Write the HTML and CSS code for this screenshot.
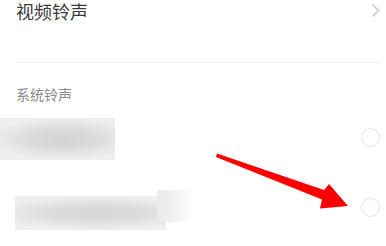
FILE: index.html
```html
<!DOCTYPE html>
<html lang="zh">
<head>
<meta charset="utf-8">
<link rel="stylesheet" href="styles.css">
</head>
<body>
<div class="page">
  <div class="row-top">
    <span class="title">视频铃声</span>
    <svg class="chev" width="9" height="15" viewBox="0 0 9 15"><polyline points="1.5,1.5 7.5,7.5 1.5,13.5" fill="none" stroke="#c8c8c8" stroke-width="1.6"/></svg>
  </div>
  <div class="divider"></div>
  <div class="label">系统铃声</div>
  <div class="item item1">
    <div class="blur1"></div>
    <span class="radio r1"></span>
  </div>
  <div class="item item2">
    <div class="blur2"></div>
    <div class="blur2b"></div>
    <span class="radio r2"></span>
  </div>
  <svg class="arrow" width="386" height="246" viewBox="0 0 386 246">
    <polygon points="217,153.5 324,190 329,184 348,206 320,208.5 322,199.5 216,157" fill="#ff0000"/>
  </svg>
</div>
</body>
</html>
```
FILE: styles.css
```css
html, body {
  margin: 0;
  padding: 0;
  background: #ffffff;
}
.page {
  position: relative;
  width: 386px;
  height: 246px;
  overflow: hidden;
  font-family: "Noto Sans CJK SC", "Noto Sans", sans-serif;
}
.row-top {
  display: flex;
  align-items: flex-start;
  justify-content: space-between;
  height: 20px;
  padding: 1px 6px 0 16px;
}
.title {
  font-size: 18px;
  line-height: 20px;
  color: #3a3a3a;
}
.chev {
  display: block;
  margin-top: 2px;
}
.divider {
  height: 1px;
  background: #efefef;
  margin: 41px 5px 0 16px;
}
.label {
  margin: 21px 0 0 16px;
  font-size: 14px;
  line-height: 20px;
  color: #8a8a8a;
}
.item {
  display: flex;
  align-items: flex-start;
}
.item1 {
  margin-top: 14px;
  height: 42px;
}
.blur1 {
  width: 115px;
  height: 42px;
  background: radial-gradient(ellipse 65% 50% at 55% 50%, #d2d2d2 0%, #dbdbdb 45%, #e8e8e8 80%, #eeeeee 100%);
}
.radio {
  width: 17px;
  height: 17px;
  border: 1.5px solid #e4e4e4;
  border-radius: 50%;
  margin-left: auto;
  margin-right: 6px;
}
.r1 { margin-top: 10px; }
.item2 {
  margin-top: 30px;
  height: 40px;
}
.blur2 {
  width: 151px;
  height: 34px;
  margin: 6px 0 0 15px;
  background: radial-gradient(ellipse 75% 50% at 55% 50%, #d5d5d5 0%, #dddddd 45%, #e9e9e9 80%, #efefef 100%);
}
.blur2b {
  width: 38px;
  height: 32px;
  margin-left: -9px;
  background: linear-gradient(to right, #e9e9e9 0%, #f1f1f1 45%, #ffffff 100%);
}
.r2 { margin-top: 8px; }
.arrow {
  position: absolute;
  left: 0;
  top: 0;
  pointer-events: none;
}
```
